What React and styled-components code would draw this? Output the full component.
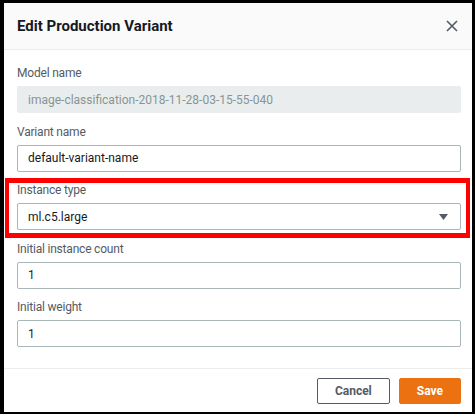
import styled, { createGlobalStyle } from "styled-components";

const GlobalStyle = createGlobalStyle`
  html, body {
    margin: 0;
    padding: 0;
    background: #ffffff;
  }
  body {
    font-family: Roboto, "Open Sans", Arial, sans-serif;
    -webkit-font-smoothing: antialiased;
  }
  * {
    box-sizing: border-box;
  }
`;

const fields = [
  { label: "Model name", value: "image-classification-2018-11-28-03-15-55-040", disabled: true },
  { label: "Variant name", value: "default-variant-name" },
  { label: "Instance type", value: "ml.c5.large", select: true, highlight: true },
  { label: "Initial instance count", value: "1" },
  { label: "Initial weight", value: "1" },
];

const CloseIcon = () => (
  <svg width="12" height="12" viewBox="0 0 12 12" aria-hidden="true">
    <path d="M1 1 L11 11 M11 1 L1 11" stroke="#545b64" strokeWidth="1.6" fill="none" />
  </svg>
);

const Caret = () => (
  <svg width="9" height="6" viewBox="0 0 9 6" aria-hidden="true">
    <path d="M0 0 H9 L4.5 6 Z" fill="#545b64" />
  </svg>
);

const App = () => {
  return (
    <>
      <GlobalStyle />
      <Modal>
        <Header>
          <Title>Edit Production Variant</Title>
          <CloseButton aria-label="Close">
            <CloseIcon />
          </CloseButton>
        </Header>

        <Body>
          {fields.map((f) => (
            <Field key={f.label} $highlight={f.highlight}>
              <Label>{f.label}</Label>
              <InputBox $disabled={f.disabled}>
                <span>{f.value}</span>
                {f.select && <Caret />}
              </InputBox>
            </Field>
          ))}
        </Body>

        <Footer>
          <Button>Cancel</Button>
          <Button $primary>Save</Button>
        </Footer>
      </Modal>
    </>
  );
};

export default App;

const Modal = styled.div`
  width: 475px;
  height: 414px;
  display: flex;
  flex-direction: column;
  background: #ffffff;
  border-style: solid;
  border-color: #000000;
  border-width: 3px 3px 2px 4px;
`;

const Header = styled.div`
  height: 47px;
  flex-shrink: 0;
  display: flex;
  align-items: center;
  justify-content: space-between;
  padding: 0 14px 0 13px;
  background: #fafafa;
  border-bottom: 1px solid #eaeded;
`;

const Title = styled.h2`
  margin: 0;
  font-size: 15px;
  font-weight: 700;
  color: #16191f;
  line-height: 20px;
`;

const CloseButton = styled.button`
  display: flex;
  align-items: center;
  padding: 0;
  border: 0;
  background: none;
  cursor: pointer;
`;

const Body = styled.div`
  flex: 1;
  display: flex;
  flex-direction: column;
  gap: 8.5px;
  padding: 13px 11px 0 13px;
`;

const Field = styled.div`
  position: relative;
  display: flex;
  flex-direction: column;

  ${(p) =>
    p.$highlight &&
    `
    &::before {
      content: "";
      position: absolute;
      top: -2px;
      bottom: -8px;
      left: -12px;
      right: -9px;
      border-style: solid;
      border-color: #ff0000;
      border-width: 5px 4px;
      pointer-events: none;
    }
  `}
`;

const Label = styled.label`
  font-size: 12px;
  line-height: 20px;
  letter-spacing: -0.2px;
  color: #545b64;
  margin-bottom: 3px;
`;

const InputBox = styled.div`
  height: 27px;
  display: flex;
  align-items: center;
  justify-content: space-between;
  padding: 0 12px 0 10px;
  font-size: 12px;
  border-radius: 2px;
  border: 1px solid ${(p) => (p.$disabled ? "#eaeded" : "#aab7b8")};
  background: ${(p) => (p.$disabled ? "#eaeded" : "#ffffff")};
  color: ${(p) => (p.$disabled ? "#879596" : "#16191f")};
`;

const Footer = styled.div`
  flex-shrink: 0;
  display: flex;
  justify-content: flex-end;
  gap: 9px;
  padding: 9px 11px 8px;
  border-top: 1px solid #eaeded;
`;

const Button = styled.button`
  height: 26px;
  padding: 0 17px;
  border-radius: 2px;
  font-family: inherit;
  font-size: 12px;
  font-weight: 700;
  cursor: pointer;
  border: 1px solid ${(p) => (p.$primary ? "#ec7211" : "#545b64")};
  background: ${(p) => (p.$primary ? "#ec7211" : "#ffffff")};
  color: ${(p) => (p.$primary ? "#ffffff" : "#545b64")};
`;
